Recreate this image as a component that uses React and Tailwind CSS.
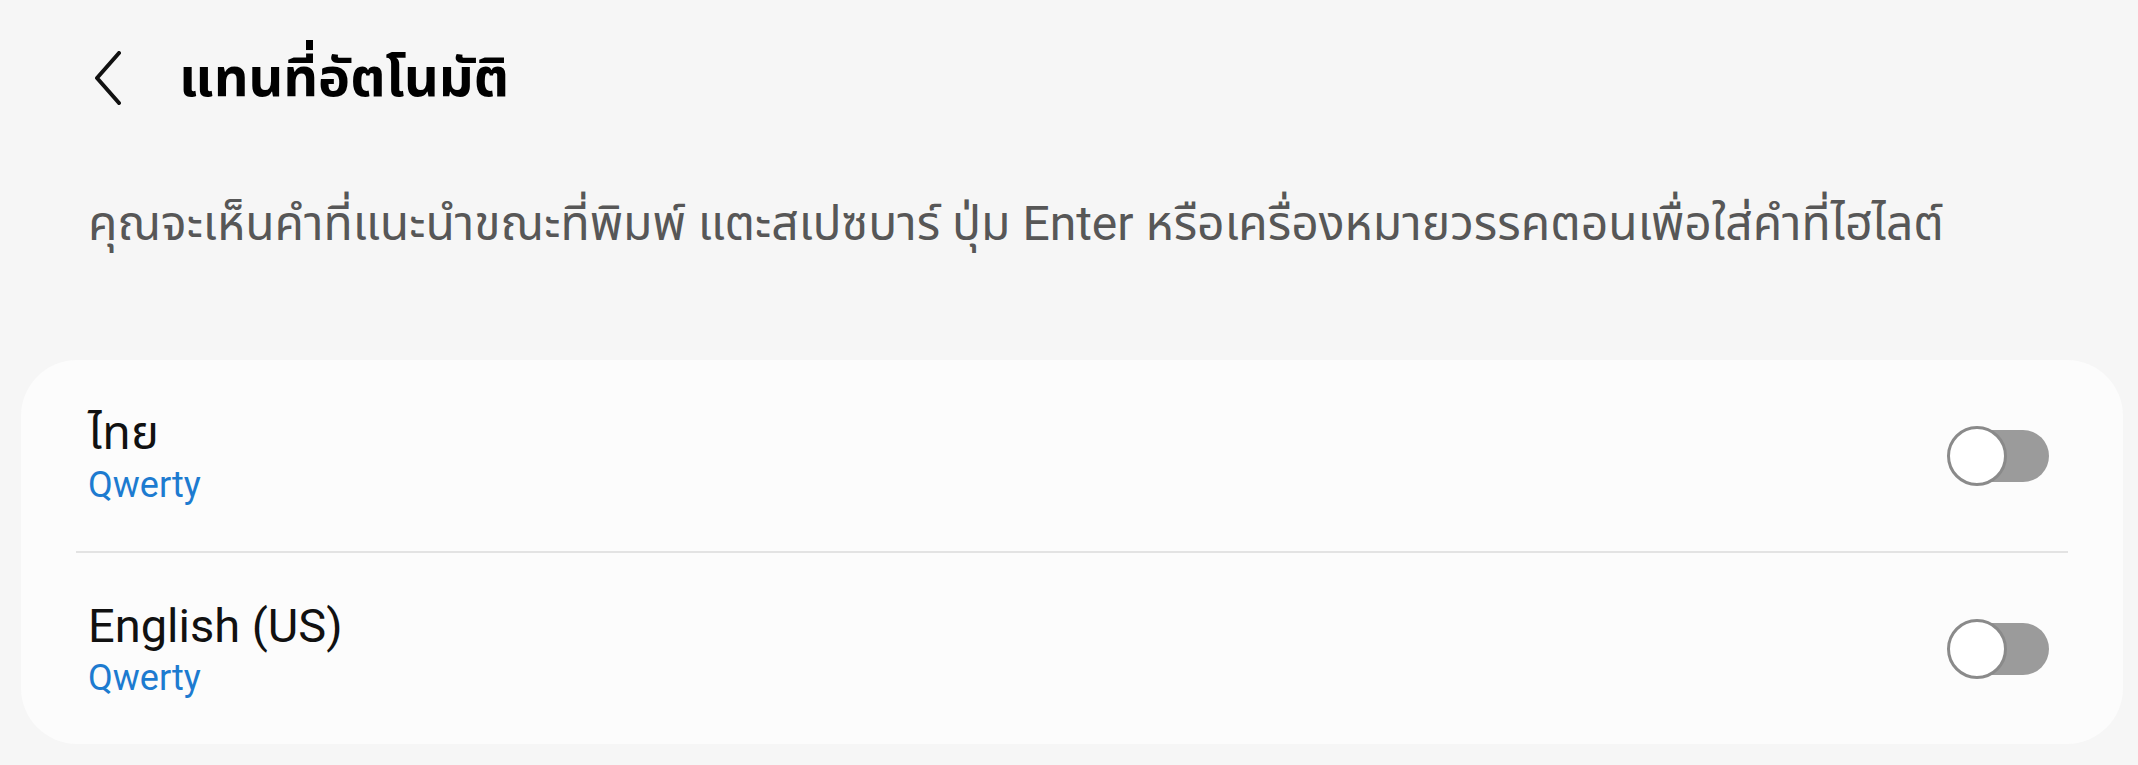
export default function App() {
  const rows = [
    { title: "ไทย", sub: "Qwerty" },
    { title: "English (US)", sub: "Qwerty" },
  ];
  return (
    <div className="w-[2138px] h-[765px] bg-[#f6f6f6] overflow-hidden font-['Roboto','Noto_Sans_Thai','Noto_Sans',sans-serif]">
      <div className="h-[156px] flex items-center pl-[94px]">
        <svg width="28" height="54" viewBox="0 0 28 54" className="shrink-0">
          <path d="M25 2 L3 27 L25 52" fill="none" stroke="#111" strokeWidth="4" strokeLinecap="round" strokeLinejoin="round" />
        </svg>
        <h1 className="ml-[57px] text-[54px] font-bold text-black leading-none">แทนที่อัตโนมัติ</h1>
      </div>
      <p className="pl-[88px] text-[48px] leading-[60px] text-[#575757] mt-[38px] whitespace-nowrap">
        คุณจะเห็นคำที่แนะนำขณะที่พิมพ์ แตะสเปซบาร์ ปุ่ม Enter หรือเครื่องหมายวรรคตอนเพื่อใส่คำที่ไฮไลต์
      </p>
      <div className="mt-[106px] ml-[21px] mr-[15px] rounded-[56px] bg-[#fcfcfc]">
        {rows.map((r, i) => (
          <div key={i}>
            {i > 0 && <div className="mx-[55px] h-[2px] bg-[#e3e3e3]" />}
            <div className="h-[191px] flex items-center justify-between pl-[67px] pr-[74px]">
              <div className="flex flex-col">
                <span className="text-[47px] leading-[58px] text-[#111]">{r.title}</span>
                <span className="text-[36px] leading-[46px] text-[#1d7bd0]">{r.sub}</span>
              </div>
              <div className="relative w-[102px] h-[60px]">
                <div className="absolute right-0 top-[4px] h-[52px] w-[96px] rounded-full bg-[#9b9b9b]" />
                <div className="absolute left-0 top-0 w-[60px] h-[60px] rounded-full bg-white border-[3px] border-[#8a8a8a]" />
              </div>
            </div>
          </div>
        ))}
      </div>
    </div>
  );
}
